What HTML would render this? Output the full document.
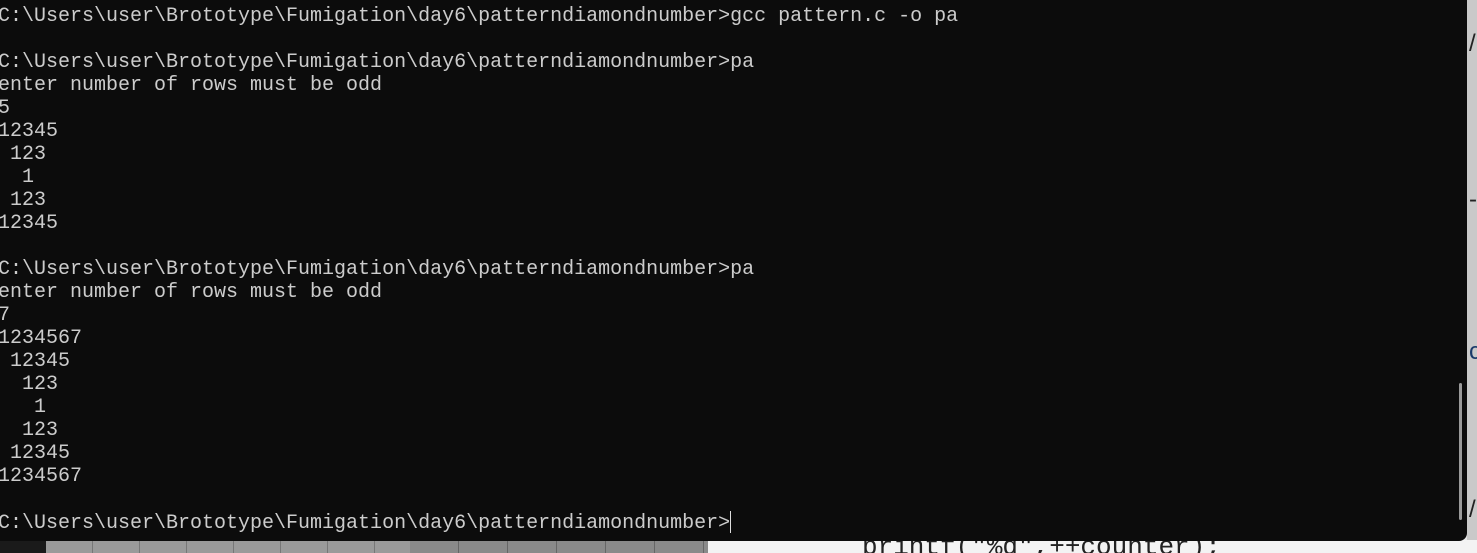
<!DOCTYPE html>
<html><head><style>
html,body{margin:0;padding:0;width:1477px;height:553px;overflow:hidden;background:#e6e6e6;position:relative;font-family:"Liberation Mono",monospace}
.bot{position:absolute;left:0;top:540px;width:1477px;height:13px;background:#f3f3f3}
.bot .d{position:absolute;left:0;top:0;width:46px;height:13px;background:#1a1a1a}
.bot .g{position:absolute;left:46px;top:0;width:364px;height:13px;background:#9a9a9a;
 background-image:repeating-linear-gradient(90deg,#9a9a9a 0 46px,#777 46px 47px)}
.bot .g2{position:absolute;left:410px;top:0;width:298px;height:13px;background:#8a8a8a;
 background-image:repeating-linear-gradient(90deg,#8a8a8a 0 48px,#666 48px 49px)}
.bot .t{position:absolute;left:862px;top:-8px;font-size:26px;color:#222;font-family:"Liberation Mono",monospace}
.side{position:absolute;left:1467px;top:0;width:10px;height:553px;background:#c9c9c9}
.term{position:absolute;left:0;top:0;width:1467px;height:541px;background:#0c0c0c;border-bottom-right-radius:8px}
pre{margin:0;position:absolute;left:-2px;top:5px;font-size:20px;line-height:23px;color:#cccccc;font-family:"Liberation Mono",monospace}
.cur{display:inline-block;width:1px;height:22px;background:#ddd;vertical-align:-5px}
.sb{position:absolute;left:1459px;top:383px;width:3px;height:137px;background:#9a9a9a;border-radius:2px}
.mk{position:absolute;left:1469px;color:#222;font-size:24px;font-family:"Liberation Sans",sans-serif}
</style></head><body>
<div class="side"></div>
<div class="mk" style="top:30px">/</div>
<div class="mk" style="top:186px">-</div>
<div class="mk" style="top:338px;color:#1a3a6a">c</div>
<div class="mk" style="top:496px">/</div>
<div class="bot"><div class="d"></div><div class="g"></div><div class="g2"></div><div class="t">printf("%d",++counter);</div></div>
<div class="term">
<pre>C:\Users\user\Brototype\Fumigation\day6\patterndiamondnumber>gcc pattern.c -o pa

C:\Users\user\Brototype\Fumigation\day6\patterndiamondnumber>pa
enter number of rows must be odd
5
12345
 123
  1
 123
12345

C:\Users\user\Brototype\Fumigation\day6\patterndiamondnumber>pa
enter number of rows must be odd
7
1234567
 12345
  123
   1
  123
 12345
1234567

C:\Users\user\Brototype\Fumigation\day6\patterndiamondnumber><span class="cur"></span></pre>
<div class="sb"></div>
</div>
</body></html>
